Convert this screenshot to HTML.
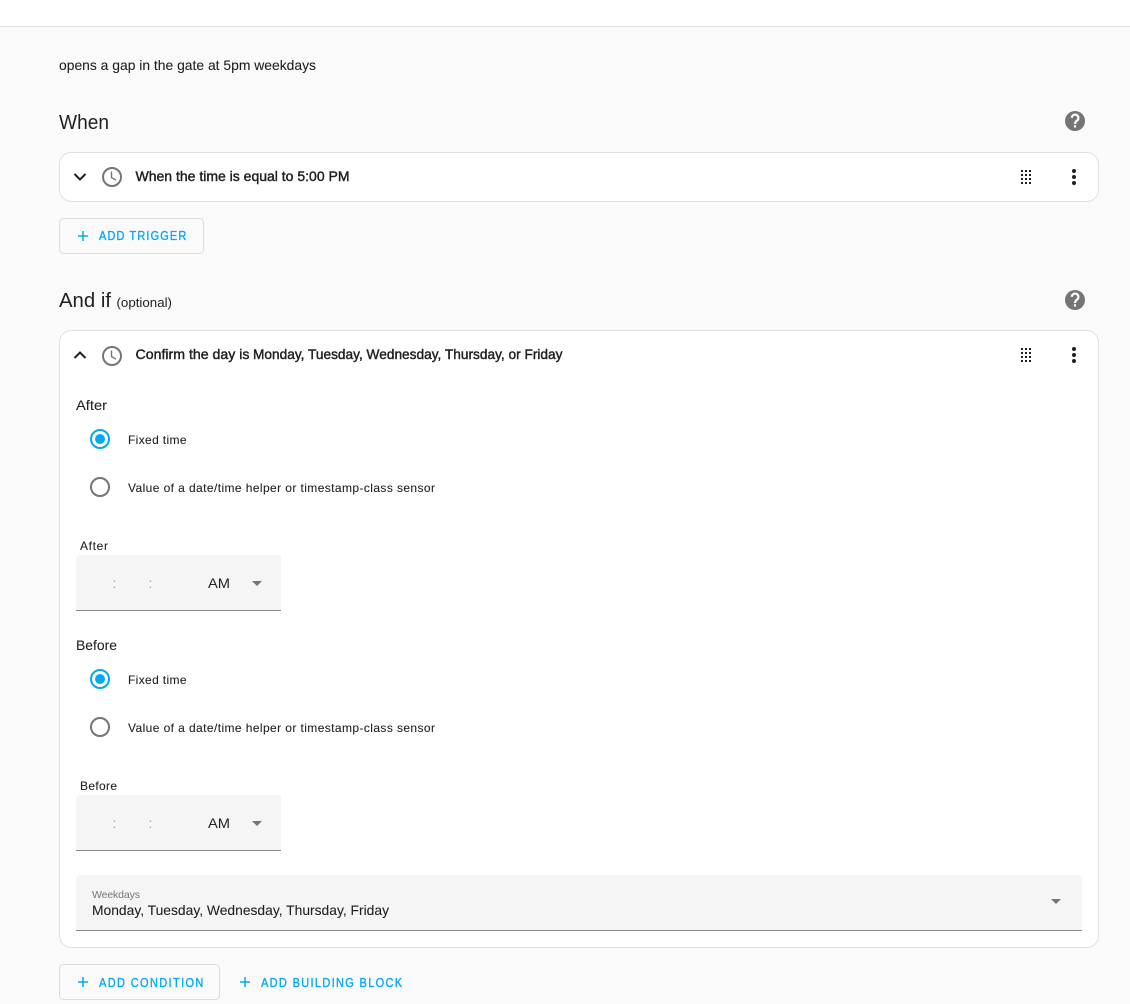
<!DOCTYPE html>
<html><head><meta charset="utf-8"><title>Automation</title>
<style>
html,body{margin:0;padding:0;width:1130px;height:1004px;overflow:hidden;background:#fafafa}
svg{display:block}
text{font-family:"Liberation Sans",Arial,sans-serif;fill:#212121}
.m{stroke:#212121;stroke-width:.42px}
.b{fill:#03a9f4;stroke:#03a9f4;stroke-width:.35px;font-size:12.500px}
.r{stroke:#212121;stroke-width:.08px}
</style></head><body>
<svg width="1130" height="1004" viewBox="0 0 1130 1004" xmlns="http://www.w3.org/2000/svg">
<defs>
<g id="clock"><circle cx="0" cy="0" r="9" fill="none" stroke="#757575" stroke-width="2"/><path d="M-.5 -5.500V.6L4 3.200" fill="none" stroke="#757575" stroke-width="1.400"/></g>
<g id="drag" fill="#212121"><rect x="0" y="0" width="2" height="2"/><rect x="4" y="0" width="2" height="2"/><rect x="8" y="0" width="2" height="2"/><rect x="0" y="4" width="2" height="2"/><rect x="4" y="4" width="2" height="2"/><rect x="8" y="4" width="2" height="2"/><rect x="0" y="8" width="2" height="2"/><rect x="4" y="8" width="2" height="2"/><rect x="8" y="8" width="2" height="2"/><rect x="0" y="12" width="2" height="2"/><rect x="4" y="12" width="2" height="2"/><rect x="8" y="12" width="2" height="2"/></g>
<g id="dots" fill="#212121"><circle cx="0" cy="-6" r="2"/><circle cx="0" cy="0" r="2"/><circle cx="0" cy="6" r="2"/></g>
<g id="help"><circle cx="0" cy="0" r="10" fill="#757575"/><path d="M-3.200 -3.200A3.300 3.300 0 1 1 2 -.4C.6 .6 0 1.200 0 3" fill="none" stroke="#fff" stroke-width="2.200"/><rect x="-1.100" y="4.300" width="2.200" height="2.200" fill="#fff"/></g>
<path id="plus" d="M-5 0H5M0 -5V5" stroke="#03a9f4" stroke-width="1.500" fill="none"/>
</defs>

<rect x="0" y="0" width="1130" height="26" fill="#fff"/>
<rect x="0" y="26" width="1130" height="1" fill="#e0e0e0"/>

<text x="59" y="70" font-size="14" class="r" textLength="257" lengthAdjust="spacingAndGlyphs">opens a gap in the gate at 5pm weekdays</text>

<text x="59" y="129" font-size="20" textLength="50" lengthAdjust="spacingAndGlyphs">When</text>
<use href="#help" x="1075" y="121"/>

<rect x="59.500" y="152.500" width="1039" height="49" rx="12" fill="#fff" stroke="#e0e0e0"/>
<path d="M74.500 174L80 179.500L85.500 174" fill="none" stroke="#212121" stroke-width="2"/>
<use href="#clock" x="112" y="177"/>
<text x="135.500" y="181" font-size="14" class="m" textLength="214" lengthAdjust="spacingAndGlyphs">When the time is equal to 5:00 PM</text>
<use href="#drag" x="1021" y="170"/>
<use href="#dots" x="1074" y="177"/>

<rect x="59.500" y="218.500" width="144" height="35" rx="4" fill="none" stroke="#dcdcdc"/>
<use href="#plus" x="83" y="236"/>
<text transform="translate(99 240) scale(.88 1)" class="b" textLength="99.200" lengthAdjust="spacing">ADD TRIGGER</text>

<text x="59" y="307" font-size="20" textLength="52" lengthAdjust="spacingAndGlyphs">And if</text>
<text x="116.500" y="307" font-size="13" textLength="55.500" lengthAdjust="spacingAndGlyphs">(optional)</text>
<use href="#help" x="1075" y="300"/>

<rect x="59.500" y="330.500" width="1039" height="617" rx="12" fill="#fff" stroke="#e0e0e0"/>
<path d="M74.500 358L80 352.500L85.500 358" fill="none" stroke="#212121" stroke-width="2"/>
<use href="#clock" x="112" y="356"/>
<text x="135.500" y="359" font-size="14" class="m" textLength="114" lengthAdjust="spacingAndGlyphs">Confirm the day is</text>
<text x="253" y="359" font-size="14" class="m" textLength="309.500" lengthAdjust="spacingAndGlyphs">Monday, Tuesday, Wednesday, Thursday, or Friday</text>
<use href="#drag" x="1021" y="348"/>
<use href="#dots" x="1074" y="355"/>

<text x="76" y="410" font-size="14" class="r" textLength="31" lengthAdjust="spacingAndGlyphs">After</text>
<circle cx="100" cy="439" r="9" fill="none" stroke="#03a9f4" stroke-width="2"/><circle cx="100" cy="439" r="5" fill="#03a9f4"/>
<text x="128" y="444" font-size="12" class="r" textLength="58.500" lengthAdjust="spacing">Fixed time</text>
<circle cx="100" cy="487" r="9" fill="none" stroke="#757575" stroke-width="2"/>
<text x="128" y="492" font-size="12" class="r" textLength="307" lengthAdjust="spacing">Value of a date/time helper or timestamp-class sensor</text>

<text x="80" y="550" font-size="12" class="r" textLength="28" lengthAdjust="spacing">After</text>
<path d="M76 559a4 4 0 0 1 4 -4H281V610H76Z" fill="#f5f5f5"/>
<rect x="76" y="610" width="205" height="1" fill="#8a8a8a"/>
<text x="112.500" y="588" font-size="14" style="fill:#9e9e9e">:</text>
<text x="148.500" y="588" font-size="14" style="fill:#9e9e9e">:</text>
<text x="208" y="588" font-size="14" textLength="22" lengthAdjust="spacingAndGlyphs">AM</text>
<path d="M252 581H262L257 586Z" fill="#757575"/>

<text x="76" y="650" font-size="14" class="r" textLength="41" lengthAdjust="spacingAndGlyphs">Before</text>
<circle cx="100" cy="679" r="9" fill="none" stroke="#03a9f4" stroke-width="2"/><circle cx="100" cy="679" r="5" fill="#03a9f4"/>
<text x="128" y="684" font-size="12" class="r" textLength="58.500" lengthAdjust="spacing">Fixed time</text>
<circle cx="100" cy="727" r="9" fill="none" stroke="#757575" stroke-width="2"/>
<text x="128" y="732" font-size="12" class="r" textLength="307" lengthAdjust="spacing">Value of a date/time helper or timestamp-class sensor</text>

<text x="80" y="790" font-size="12" class="r" textLength="37" lengthAdjust="spacing">Before</text>
<path d="M76 799a4 4 0 0 1 4 -4H281V850H76Z" fill="#f5f5f5"/>
<rect x="76" y="850" width="205" height="1" fill="#8a8a8a"/>
<text x="112.500" y="828" font-size="14" style="fill:#9e9e9e">:</text>
<text x="148.500" y="828" font-size="14" style="fill:#9e9e9e">:</text>
<text x="208" y="828" font-size="14" textLength="22" lengthAdjust="spacingAndGlyphs">AM</text>
<path d="M252 821H262L257 826Z" fill="#757575"/>

<path d="M76 879a4 4 0 0 1 4 -4H1078a4 4 0 0 1 4 4V930H76Z" fill="#f5f5f5"/>
<rect x="76" y="930" width="1006" height="1" fill="#8a8a8a"/>
<text x="92" y="898" font-size="10.500" style="fill:#757575" textLength="48" lengthAdjust="spacing">Weekdays</text>
<text x="92" y="915" font-size="14" class="r" textLength="297" lengthAdjust="spacingAndGlyphs">Monday, Tuesday, Wednesday, Thursday, Friday</text>
<path d="M1051 899H1061L1056 904Z" fill="#757575"/>

<rect x="59.500" y="964.500" width="160" height="35" rx="4" fill="none" stroke="#dcdcdc"/>
<use href="#plus" x="83" y="982"/>
<text transform="translate(99 987) scale(.88 1)" class="b" textLength="118.600" lengthAdjust="spacing">ADD CONDITION</text>
<use href="#plus" x="245" y="982"/>
<text transform="translate(261 987) scale(.88 1)" class="b" textLength="160.400" lengthAdjust="spacing">ADD BUILDING BLOCK</text>
</svg>
</body></html>
